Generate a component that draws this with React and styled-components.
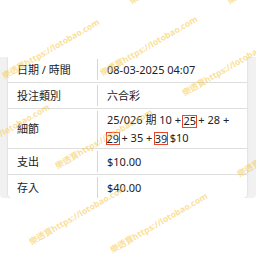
import React from "react";
import styled, { createGlobalStyle } from "styled-components";

const GlobalStyle = createGlobalStyle`
  html, body {
    margin: 0;
    padding: 0;
    background: #ffffff;
  }
  body {
    font-family: "Noto Sans", "Noto Sans CJK TC", sans-serif;
    color: #222222;
  }
`;

const rows = [
  { label: "日期 / 時間", value: "08-03-2025 04:07" },
  { label: "投注類別", value: "六合彩" },
  {
    label: "細節",
    lines: [
      ["25/026 期 10 + ", { hit: "25" }, " + 28 +"],
      [{ hit: "29" }, " + 35 + ", { hit: "39" }, " $10"],
    ],
  },
  { label: "支出", value: "$10.00" },
  { label: "存入", value: "$40.00" },
];

// watermark starts (left end of the text), tilted up to the right
const marks = [
  [132, 5],
  [230, 5],
  [5, 80],
  [103, 77],
  [185, 97],
  [-45, 165],
  [58, 170],
  [240, 178],
  [32, 246],
  [113, 254],
];

const App = () => {
  return (
    <Page>
      <GlobalStyle />
      <Band>
        <Card>
          {rows.map((row) => (
            <Row key={row.label}>
              <Label>{row.label}</Label>
              <Value>
                {row.lines ? (
                  <div>
                    {row.lines.map((line, i) => (
                      <Line key={i}>
                        {line.map((part, j) =>
                          typeof part === "string" ? (
                            <span key={j}>{part}</span>
                          ) : (
                            <Hit key={j}>{part.hit}</Hit>
                          )
                        )}
                      </Line>
                    ))}
                  </div>
                ) : (
                  row.value
                )}
              </Value>
            </Row>
          ))}
        </Card>
      </Band>
      <Watermarks>
        {marks.map(([x, y], i) => (
          <Mark key={i} style={{ left: x, top: y - 9 }}>
            樂透寶https://lotobao.com
          </Mark>
        ))}
      </Watermarks>
    </Page>
  );
};

const Page = styled.div`
  position: relative;
  width: 256px;
  height: 256px;
  overflow: hidden;
  padding-top: 57px;
  box-sizing: border-box;
`;

const Band = styled.div`
  background: #f1f1f1;
  padding: 0 9px 0 8px;
  height: 141px;
  overflow: hidden;
  border-radius: 0 0 4px 4px;
`;

const Card = styled.div`
  background: #ffffff;
  height: 141px;
  overflow: hidden;
  box-shadow: 0 0 2px rgba(0, 0, 0, 0.18);
  border-radius: 0 0 4px 4px;
`;

const Row = styled.div`
  display: flex;
  min-height: 25px;
  border-bottom: 1px solid #dedede;
  font-size: 11px;
  line-height: 17.5px;
`;

const Label = styled.div`
  display: flex;
  align-items: center;
  width: 89px;
  flex-shrink: 0;
  padding: 0 9px;
  box-sizing: border-box;
`;

const Value = styled.div`
  display: flex;
  align-items: center;
  flex: 1;
  margin: 2px 0;
  padding: 0 9px;
  border-left: 1px solid #d6d6d6;
  white-space: nowrap;
`;

const Line = styled.div`
  height: 17.5px;
`;

const Hit = styled.span`
  display: inline-block;
  line-height: 10px;
  padding: 0.5px 0;
  margin: 0 -1.5px;
  border: 1.5px solid #e9462e;
  vertical-align: -1px;
`;

const Watermarks = styled.div`
  position: absolute;
  inset: 0;
  pointer-events: none;
`;

const Mark = styled.span`
  position: absolute;
  white-space: nowrap;
  font-family: "Noto Sans", "Noto Sans CJK TC", sans-serif;
  font-size: 8.5px;
  font-weight: 700;
  line-height: 9px;
  color: rgba(246, 196, 60, 0.55);
  transform: rotate(-30deg);
  transform-origin: left bottom;
`;

export default App;
